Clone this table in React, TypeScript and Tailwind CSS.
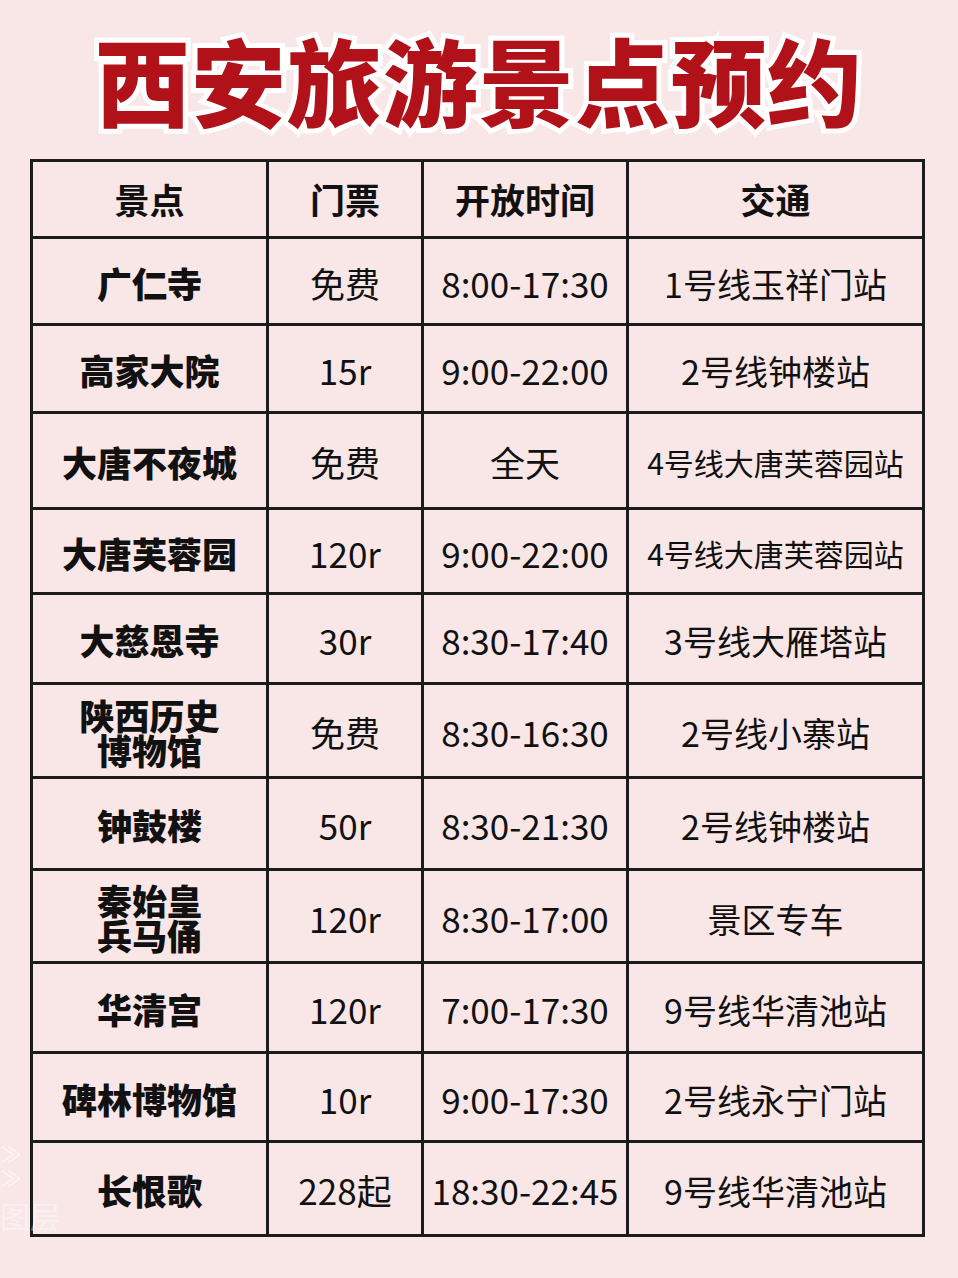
const rows: { name: string; price: string; hours: string; traffic: string; h: string; small?: boolean }[] = [
  { name: "广仁寺", price: "免费", hours: "8:00-17:30", traffic: "1号线玉祥门站", h: "h-[87px]" },
  { name: "高家大院", price: "15r", hours: "9:00-22:00", traffic: "2号线钟楼站", h: "h-[88px]" },
  { name: "大唐不夜城", price: "免费", hours: "全天", traffic: "4号线大唐芙蓉园站", h: "h-[96px]", small: true },
  { name: "大唐芙蓉园", price: "120r", hours: "9:00-22:00", traffic: "4号线大唐芙蓉园站", h: "h-[85px]", small: true },
  { name: "大慈恩寺", price: "30r", hours: "8:30-17:40", traffic: "3号线大雁塔站", h: "h-[90px]" },
  { name: "陕西历史\n博物馆", price: "免费", hours: "8:30-16:30", traffic: "2号线小寨站", h: "h-[94px]" },
  { name: "钟鼓楼", price: "50r", hours: "8:30-21:30", traffic: "2号线钟楼站", h: "h-[92px]" },
  { name: "秦始皇\n兵马俑", price: "120r", hours: "8:30-17:00", traffic: "景区专车", h: "h-[93px]" },
  { name: "华清宫", price: "120r", hours: "7:00-17:30", traffic: "9号线华清池站", h: "h-[90px]" },
  { name: "碑林博物馆", price: "10r", hours: "9:00-17:30", traffic: "2号线永宁门站", h: "h-[89px]" },
  { name: "长恨歌", price: "228起", hours: "18:30-22:45", traffic: "9号线华清池站", h: "h-[94px]" },
];

const cell = "flex items-center justify-center border-r-[3px] border-b-[3px] border-[#1c1c1c] text-center";

export default function App() {
  return (
    <div className="relative w-[958px] h-[1278px] overflow-hidden bg-[#f9e7e7] text-[#111] font-['Noto_Sans_CJK_SC','Noto_Sans',sans-serif]">
      {/* 标题 */}
      <div className="flex h-[160px] items-center justify-center pb-[4px]">
        <h1 className="text-[95px] font-black leading-none tracking-[1px] text-[#b11219] [-webkit-text-stroke:10px_#ffffff] [paint-order:stroke_fill]">
          西安旅游景点预约
        </h1>
      </div>

      {/* 表格 */}
      <div className="ml-[30px] w-[895px] border-l-[3px] border-t-[3px] border-[#1c1c1c] -mt-[1px]">
        <div className="grid grid-cols-[236px_155px_205px_296px] h-[77px] text-[35px] font-bold">
          <div className={cell}>景点</div>
          <div className={cell}>门票</div>
          <div className={cell}>开放时间</div>
          <div className={cell}>交通</div>
        </div>
        {rows.map((r) => (
          <div key={r.name} className={`grid grid-cols-[236px_155px_205px_296px] ${r.h}`}>
            <div className={`${cell} text-[35px] font-black leading-[35px] pt-[2px] whitespace-pre-line`}>
              {r.name}
            </div>
            <div className={`${cell} text-[35px] pt-[4px]`}>{r.price}</div>
            <div className={`${cell} text-[35px] pt-[4px] whitespace-nowrap`}>{r.hours}</div>
            <div className={`${cell} pt-[4px] whitespace-nowrap ${r.small ? "text-[30px]" : "text-[34px]"}`}>
              {r.traffic}
            </div>
          </div>
        ))}
      </div>

      {/* 左下角水印 */}
      <div className="absolute left-0 top-[1140px] flex flex-col text-white/70">
        <span className="text-[22px] leading-[24px] whitespace-pre-line">{"≫\n≫"}</span>
        <span className="mt-[12px] text-[30px] leading-none text-white/40">图层</span>
      </div>
    </div>
  );
}
